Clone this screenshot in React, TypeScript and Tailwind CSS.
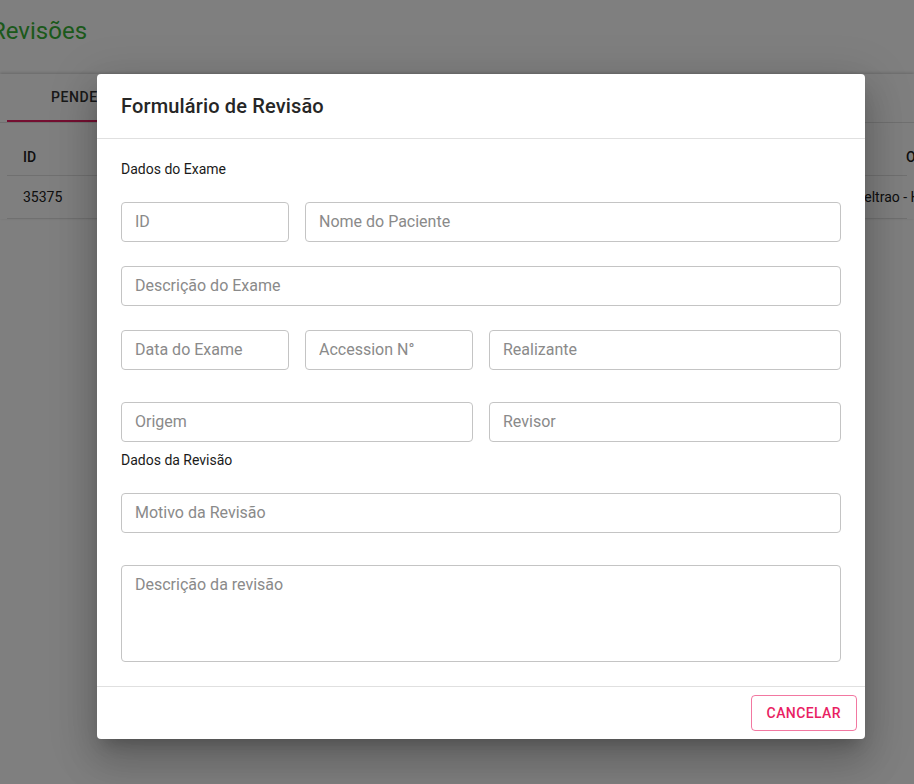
import clsx from "clsx";

const font = { fontFamily: "Roboto, 'Noto Sans', sans-serif" };

interface FieldProps {
  label: string;
  span?: string;
  multiline?: boolean;
}

function Field({ label, span, multiline }: FieldProps) {
  if (multiline) {
    return (
      <textarea
        placeholder={label}
        className={clsx(
          "block h-[97px] w-full resize-none rounded border border-[#c4c4c4] bg-white px-[13px] pt-[7px] text-base text-[#212121] outline-none placeholder:text-[#8a8a8a]",
          span,
        )}
      />
    );
  }
  return (
    <input
      placeholder={label}
      className={clsx(
        "block h-10 w-full rounded border border-[#c4c4c4] bg-white px-[13px] pb-[1px] text-base text-[#212121] outline-none placeholder:text-[#8a8a8a]",
        span,
      )}
    />
  );
}

export default function App() {
  return (
    <div className="relative h-[784px] w-[914px] overflow-hidden bg-white" style={font}>
      {/* page under the dialog */}
      <div>
        <h1 className="ml-[-9px] pt-[15px] text-[24px] leading-[32px] text-[#37b237]">Revisões</h1>
        <div className="mt-[27px] shadow-[0_-1px_3px_rgba(0,0,0,0.2)]">
          <div className="flex h-[49px] border-b border-[#e0e0e0]">
            <div className="ml-[7px] flex w-[150px] items-center border-b-2 border-[#e91e63] pl-[44px] text-sm font-medium tracking-[0.6px] text-[#333]">
              PENDENTES
            </div>
          </div>
          <div className="mx-[7px]">
            <div className="flex h-[53px] items-end justify-between border-b border-[#e0e0e0] pb-[8px] pl-4 text-sm font-medium text-[#212121]">
              <span>ID</span>
              <span className="mr-[-54px] w-[55px]">Origem</span>
            </div>
            <div className="flex h-[43px] items-center justify-between border-b border-[#e0e0e0] pl-4 text-sm text-[#212121]">
              <span>35375</span>
              <span className="mr-[-108px] w-[215px] whitespace-nowrap">Hospital Beltrao - HB</span>
            </div>
          </div>
        </div>
      </div>

      {/* overlay */}
      <div className="absolute inset-0 bg-black/50" />

      {/* dialog */}
      <div className="absolute left-[97px] top-[74px] flex w-[768px] flex-col rounded bg-white shadow-[0_11px_15px_-7px_rgba(0,0,0,0.2),0_24px_38px_3px_rgba(0,0,0,0.14),0_9px_46px_8px_rgba(0,0,0,0.12)]">
        <div className="flex h-[65px] items-center border-b border-[#e0e0e0] px-6">
          <h2 className="text-[20px] font-medium leading-8 tracking-[0.15px] text-[#262626]">
            Formulário de Revisão
          </h2>
        </div>

        <div className="px-6 pb-6 pt-5">
          <p className="text-sm font-normal leading-5 text-[#1a1a1a]">Dados do Exame</p>
          <div className="mt-[23px] grid grid-cols-4 gap-4">
            <Field label="ID" />
            <Field label="Nome do Paciente" span="col-span-3" />
          </div>
          <div className="mt-6 grid grid-cols-4 gap-4">
            <Field label="Descrição do Exame" span="col-span-4" />
          </div>
          <div className="mt-6 grid grid-cols-4 gap-4">
            <Field label="Data do Exame" />
            <Field label="Accession N°" />
            <Field label="Realizante" span="col-span-2" />
          </div>
          <div className="mt-8 grid grid-cols-4 gap-4">
            <Field label="Origem" span="col-span-2" />
            <Field label="Revisor" span="col-span-2" />
          </div>
          <p className="mt-[8px] text-sm font-normal leading-5 text-[#1a1a1a]">Dados da Revisão</p>
          <div className="mt-[23px]">
            <Field label="Motivo da Revisão" />
          </div>
          <div className="mt-8">
            <Field label="Descrição da revisão" multiline />
          </div>
        </div>

        <div className="flex justify-end border-t border-[#e0e0e0] p-2">
          <button className="h-9 rounded border border-[#e91e63]/60 px-[15px] text-sm font-medium tracking-[0.4px] text-[#e91e63]">
            CANCELAR
          </button>
        </div>
      </div>
    </div>
  );
}
